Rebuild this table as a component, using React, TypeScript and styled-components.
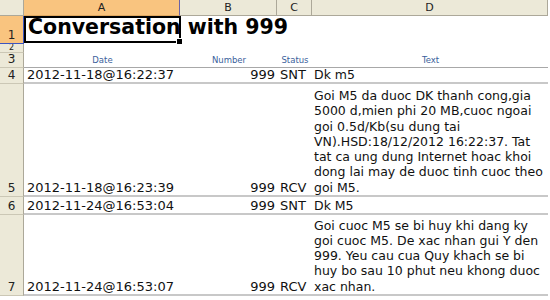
import styled, { createGlobalStyle } from "styled-components";

const GlobalStyle = createGlobalStyle`
  body {
    margin: 0;
    background: #ffffff;
  }
`;

type Message = {
    date: string;
    number: string;
    status: string;
    lines: string[];
    height: number;
};

const messages: Message[] = [
    { date: "2012-11-18@16:22:37", number: "999", status: "SNT", lines: ["Dk m5"], height: 16 },
    {
        date: "2012-11-18@16:23:39",
        number: "999",
        status: "RCV",
        lines: [
            "Goi M5 da duoc DK thanh cong,gia",
            "5000 d,mien phi 20 MB,cuoc ngoai",
            "goi 0.5d/Kb(su dung tai",
            "VN).HSD:18/12/2012 16:22:37. Tat",
            "tat ca ung dung Internet hoac khoi",
            "dong lai may de duoc tinh cuoc theo",
            "goi M5.",
        ],
        height: 113,
    },
    { date: "2012-11-24@16:53:04", number: "999", status: "SNT", lines: ["Dk M5"], height: 18 },
    {
        date: "2012-11-24@16:53:07",
        number: "999",
        status: "RCV",
        lines: [
            "Goi cuoc M5 se bi huy khi dang ky",
            "goi cuoc M5. De xac nhan gui Y den",
            "999. Yeu cau cua Quy khach se bi",
            "huy bo sau 10 phut neu khong duoc",
            "xac nhan.",
        ],
        height: 81,
    },
];

const columns = ["A", "B", "C", "D"];
const rowHeights = [16, 28, 9, 15, ...messages.map((m) => m.height)];

const App = () => {
    return (
        <>
            <GlobalStyle />
            <Sheet style={{ gridTemplateRows: rowHeights.map((h) => `${h}px`).join(" ") }}>
                <Corner />
                {columns.map((c) => (
                    <ColHeader key={c} $active={c === "A"}>
                        {c}
                    </ColHeader>
                ))}

                <RowHeader $active>1</RowHeader>
                <TitleCell>
                    Conversation with 999
                    <Selection>
                        <Handle />
                    </Selection>
                </TitleCell>
                <Cell />
                <Cell />
                <Cell />

                <RowHeader $small>2</RowHeader>
                <Cell />
                <Cell />
                <Cell />
                <Cell />

                <RowHeader>3</RowHeader>
                <FieldLabel $line>Date</FieldLabel>
                <FieldLabel $line>Number</FieldLabel>
                <FieldLabel $line>Status</FieldLabel>
                <FieldLabel $line>Text</FieldLabel>

                {messages.map((m, i) => (
                    <Row key={m.date} m={m} index={i + 4} />
                ))}
            </Sheet>
        </>
    );
};

const Row = ({ m, index }: { m: Message; index: number }) => (
    <>
        <RowHeader>{index}</RowHeader>
        <Cell $line>{m.date}</Cell>
        <Cell $line $align="right">
            {m.number}
        </Cell>
        <Cell $line>{m.status}</Cell>
        <TextCell $line>
            <MessageText>
                {m.lines.map((l, i) => (
                    <div key={i}>{l}</div>
                ))}
            </MessageText>
        </TextCell>
    </>
);

const Sheet = styled.div`
    display: grid;
    grid-template-columns: 24px 156px 97px 35px 236px;
    width: 548px;
    font-family: "DejaVu Sans", Verdana, sans-serif;
    color: #111;
    background: #ffffff;
`;

const Corner = styled.div`
    background: #ece9d8;
    border-right: 1px solid #aca899;
    border-bottom: 1px solid #aca899;
`;

const ColHeader = styled.div<{ $active?: boolean }>`
    display: flex;
    align-items: center;
    justify-content: center;
    font-size: 11px;
    color: #222;
    background: ${(p) => (p.$active ? "#f9c47f" : "#ece9d8")};
    border-right: 1px solid ${(p) => (p.$active ? "#6a62a8" : "#aca899")};
    border-bottom: 1px solid ${(p) => (p.$active ? "#e0a860" : "#aca899")};
`;

const RowHeader = styled.div<{ $active?: boolean; $small?: boolean }>`
    display: flex;
    align-items: ${(p) => (p.$small ? "center" : "flex-end")};
    justify-content: center;
    overflow: hidden;
    padding-bottom: ${(p) => (p.$small ? "0" : "1px")};
    font-size: ${(p) => (p.$small ? "8px" : "12px")};
    line-height: ${(p) => (p.$small ? "8px" : "13px")};
    color: #222;
    background: ${(p) => (p.$active ? "#f9c47f" : "#ece9d8")};
    border-right: 1px solid ${(p) => (p.$active ? "#3d55c0" : "#aca899")};
    border-bottom: 1px solid ${(p) => (p.$active ? "#3d55c0" : "#cbc7b5")};
    box-sizing: border-box;
`;

const Cell = styled.div<{ $align?: "left" | "right" | "center"; $line?: boolean }>`
    display: flex;
    align-items: flex-end;
    justify-content: ${(p) =>
        p.$align === "right" ? "flex-end" : p.$align === "center" ? "center" : "flex-start"};
    padding: 0 2px 0 3px;
    font-size: 13px;
    line-height: 15.3px;
    white-space: nowrap;
    overflow: hidden;
    box-sizing: border-box;
    border-bottom: 2px solid ${(p) => (p.$line ? "#c8c8c8" : "transparent")};
`;

const TextCell = styled(Cell)`
    padding-left: 2px;
    padding-right: 0;
    font-size: 12.5px;
`;

const TitleCell = styled(Cell)`
    position: relative;
    overflow: visible;
    z-index: 1;
    padding-left: 4px;
    padding-bottom: 3px;
    font-size: 20.5px;
    font-weight: bold;
    line-height: 24px;
    color: #000;
`;

const Selection = styled.div`
    position: absolute;
    inset: 0 -1px -1px 0;
    border: 2px solid #000;
    pointer-events: none;
`;

const Handle = styled.div`
    position: absolute;
    right: -4px;
    bottom: -4px;
    width: 5px;
    height: 5px;
    background: #000;
    border: 1px solid #fff;
`;

const FieldLabel = styled(Cell)`
    justify-content: center;
    padding-bottom: 1px;
    font-size: 8.5px;
    line-height: 11px;
    color: #3b5f9c;
    border-bottom-width: 1px;
    border-bottom-color: #a8a8a8;
`;

const MessageText = styled.div`
    display: flex;
    flex-direction: column;
`;

export default App;
